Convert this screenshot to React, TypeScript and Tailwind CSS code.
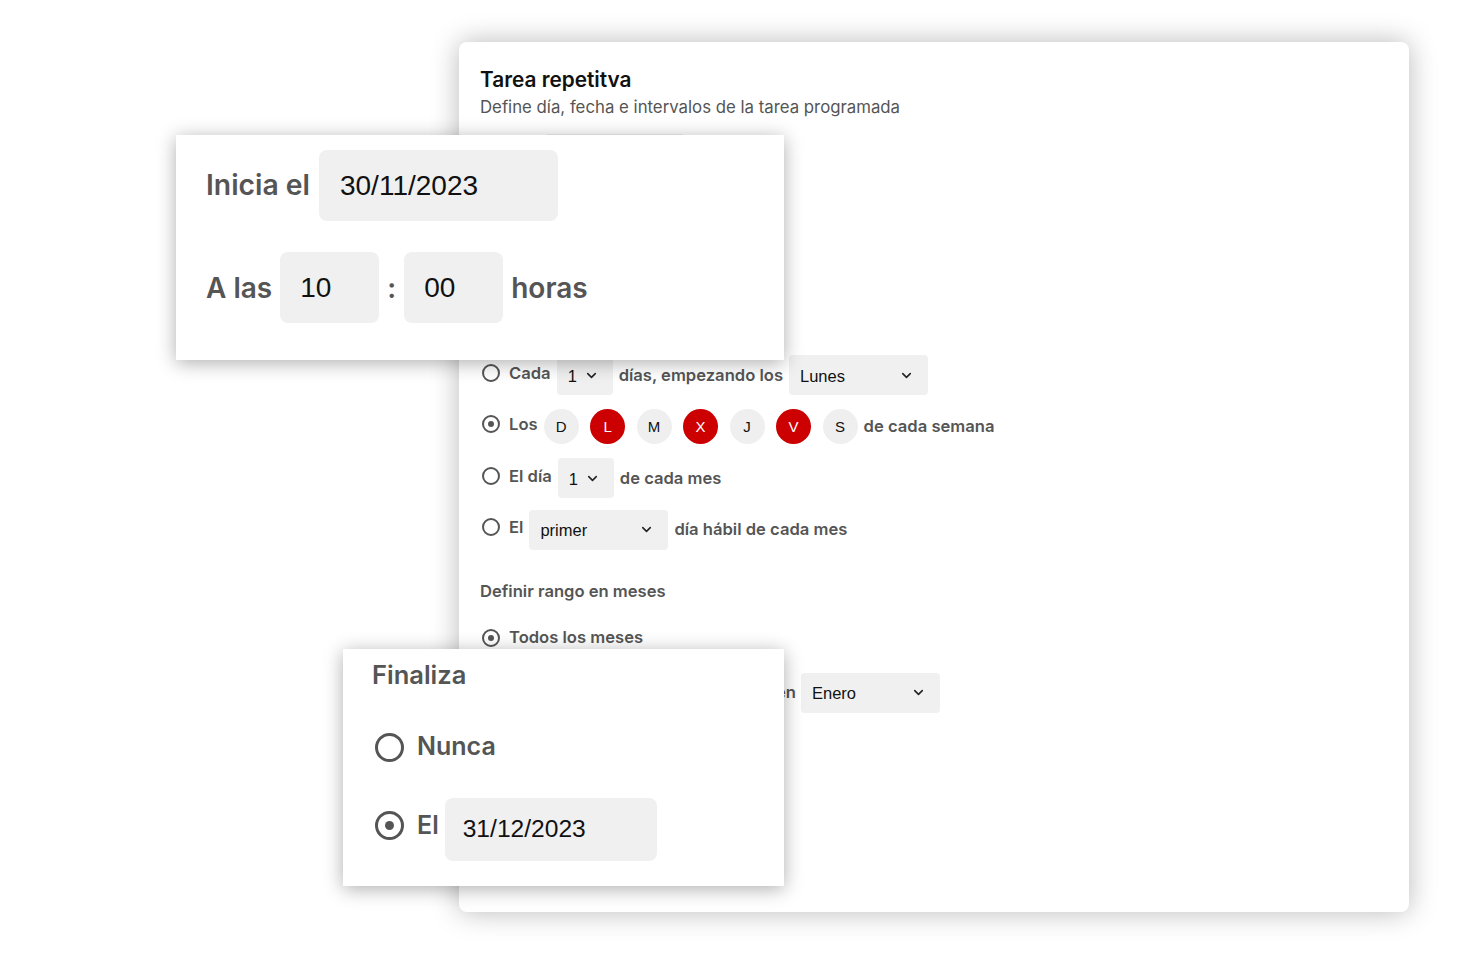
import React from "react";
import { ChevronDown } from "lucide-react";

const LABEL = "text-[#555] font-semibold";
const VALUE = "font-['Liberation_Sans',Arial,sans-serif] text-[#111]";

const Radio = ({ checked = false }: { checked?: boolean }) => (
  <span className="w-[18px] h-[18px] rounded-full border-2 border-[#555] flex items-center justify-center shrink-0">
    {checked && <span className="w-1.5 h-1.5 rounded-full bg-[#555]" />}
  </span>
);

const BigRadio = ({ checked = false }: { checked?: boolean }) => (
  <span className="w-[29px] h-[29px] rounded-full border-[3px] border-[#555] flex items-center justify-center shrink-0">
    {checked && <span className="w-[9px] h-[9px] rounded-full bg-[#555]" />}
  </span>
);

const Select = ({ value, width }: { value: string; width: string }) => (
  <div className={`h-10 ${width} bg-[#f0f0f0] rounded flex items-center justify-between pl-[11px] pr-[14px] shrink-0`}>
    <span className={`${VALUE} text-[16.5px] translate-y-px`}>{value}</span>
    <ChevronDown size={15} strokeWidth={2.5} className="text-[#222]" />
  </div>
);

const days = [
  { d: "D", on: false },
  { d: "L", on: true },
  { d: "M", on: false },
  { d: "X", on: true },
  { d: "J", on: false },
  { d: "V", on: true },
  { d: "S", on: false },
];

export default function App() {
  return (
    <div className="relative w-[1476px] h-[954px] bg-white overflow-hidden pt-[42px] pl-[459px] font-['Inter','Noto_Sans',sans-serif]">
      {/* main card */}
      <div className="w-[950px] h-[870px] rounded-lg bg-white shadow-[0_0_28px_rgba(0,0,0,0.28)] px-[21px] pt-6 text-[16.6px]">
        <h1 className="text-[20.8px] leading-7 font-semibold text-[#111]">Tarea repetitva</h1>
        <p className="text-[16.8px] leading-6 text-[#555] mt-px">Define día, fecha e intervalos de la tarea programada</p>

        {/* campos de inicio (tapados por la ampliación) */}
        <div className="mt-[15px] ml-[65px] h-10 w-[140px] rounded bg-[#f0f0f0]" />
        <div className="mt-3 h-10" />

        <div className="mt-[129px] flex flex-col gap-[11.5px]">
          <div className="flex items-center gap-1.5 h-10">
            <div className="flex items-center gap-[9px] -mt-1 ml-0.5">
              <Radio />
              <span className={LABEL}>Cada</span>
            </div>
            <Select value="1" width="w-[56px]" />
            <span className={LABEL}>días, empezando los</span>
            <Select value="Lunes" width="w-[139px]" />
          </div>

          <div className="flex items-center gap-1.5 h-10">
            <div className="flex items-center gap-[9px] -mt-1 ml-0.5">
              <Radio checked />
              <span className={LABEL}>Los</span>
            </div>
            <div className="flex items-center gap-[11.5px]">
              {days.map((x) => (
                <span
                  key={x.d}
                  className={`w-[35px] h-[35px] rounded-full flex items-center justify-center text-[15px] pt-0.5 font-['Liberation_Sans',Arial,sans-serif] ${
                    x.on ? "bg-[#cc0000] text-white" : "bg-[#efefef] text-[#111]"
                  }`}
                >
                  {x.d}
                </span>
              ))}
            </div>
            <span className={LABEL}>de cada semana</span>
          </div>

          <div className="flex items-center gap-1.5 h-10">
            <div className="flex items-center gap-[9px] -mt-1 ml-0.5">
              <Radio />
              <span className={LABEL}>El día</span>
            </div>
            <Select value="1" width="w-[56px]" />
            <span className={LABEL}>de cada mes</span>
          </div>

          <div className="flex items-center gap-1.5 h-10">
            <div className="flex items-center gap-[9px] -mt-1 ml-0.5">
              <Radio />
              <span className={LABEL}>El</span>
            </div>
            <Select value="primer" width="w-[139px]" />
            <span className={LABEL}>día hábil de cada mes</span>
          </div>
        </div>

        <p className={`${LABEL} mt-[29px] leading-6`}>Definir rango en meses</p>

        <div className="mt-[23px] flex items-center gap-[9px] h-6 ml-0.5">
          <Radio checked />
          <span className={LABEL}>Todos los meses</span>
        </div>

        <div className="mt-[23px] flex items-center gap-[5px] h-10">
          <div className="flex items-center gap-[9px] ml-0.5">
            <Radio />
            <span className={`${LABEL} w-[287px] text-right whitespace-nowrap`}>Meses específicos, empezando en</span>
          </div>
          <Select value="Enero" width="w-[139px]" />
        </div>
      </div>

      {/* ampliación: inicio */}
      <div className="absolute left-[176px] top-[135px] w-[608px] h-[225px] bg-white shadow-[0_3px_18px_rgba(0,0,0,0.32)] pl-[30px] pt-[15px]">
        <div className="flex items-center gap-[9px] h-[71px]">
          <span className={`${LABEL} text-[28.3px]`}>Inicia el</span>
          <div className="w-[239px] h-[71px] rounded-lg bg-[#f0f0f0] pl-[21px] flex items-center">
            <span className={`${VALUE} text-[28px]`}>30/11/2023</span>
          </div>
        </div>
        <div className="mt-[31px] flex items-center h-[71px]">
          <span className={`${LABEL} text-[28px]`}>A las</span>
          <div className="ml-2 w-[99px] h-[71px] rounded-lg bg-[#f0f0f0] pl-[20px] flex items-center">
            <span className={`${VALUE} text-[28px]`}>10</span>
          </div>
          <span className={`${LABEL} text-[28px] w-[25px] text-center`}>:</span>
          <div className="w-[99px] h-[71px] rounded-lg bg-[#f0f0f0] pl-[20px] flex items-center">
            <span className={`${VALUE} text-[28px]`}>00</span>
          </div>
          <span className={`${LABEL} text-[28px] ml-2`}>horas</span>
        </div>
      </div>

      {/* ampliación: fin */}
      <div className="absolute left-[343px] top-[649px] w-[441px] h-[237px] bg-white shadow-[0_3px_18px_rgba(0,0,0,0.32)] pl-[29px] pt-[10px]">
        <p className={`${LABEL} text-[25.5px] leading-8`}>Finaliza</p>
        <div className="mt-10 flex items-center gap-[13px] h-8 ml-[3px]">
          <BigRadio />
          <span className={`${LABEL} text-[25px]`}>Nunca</span>
        </div>
        <div className="mt-[35px] flex items-center h-[63px] ml-[3px]">
          <div className="flex items-center gap-[13px] mb-2">
            <BigRadio checked />
            <span className={`${LABEL} text-[25px]`}>El</span>
          </div>
          <div className="ml-[6px] w-[212px] h-[63px] rounded-lg bg-[#f0f0f0] pl-[18px] flex items-center">
            <span className={`${VALUE} text-[24.6px]`}>31/12/2023</span>
          </div>
        </div>
      </div>
    </div>
  );
}
